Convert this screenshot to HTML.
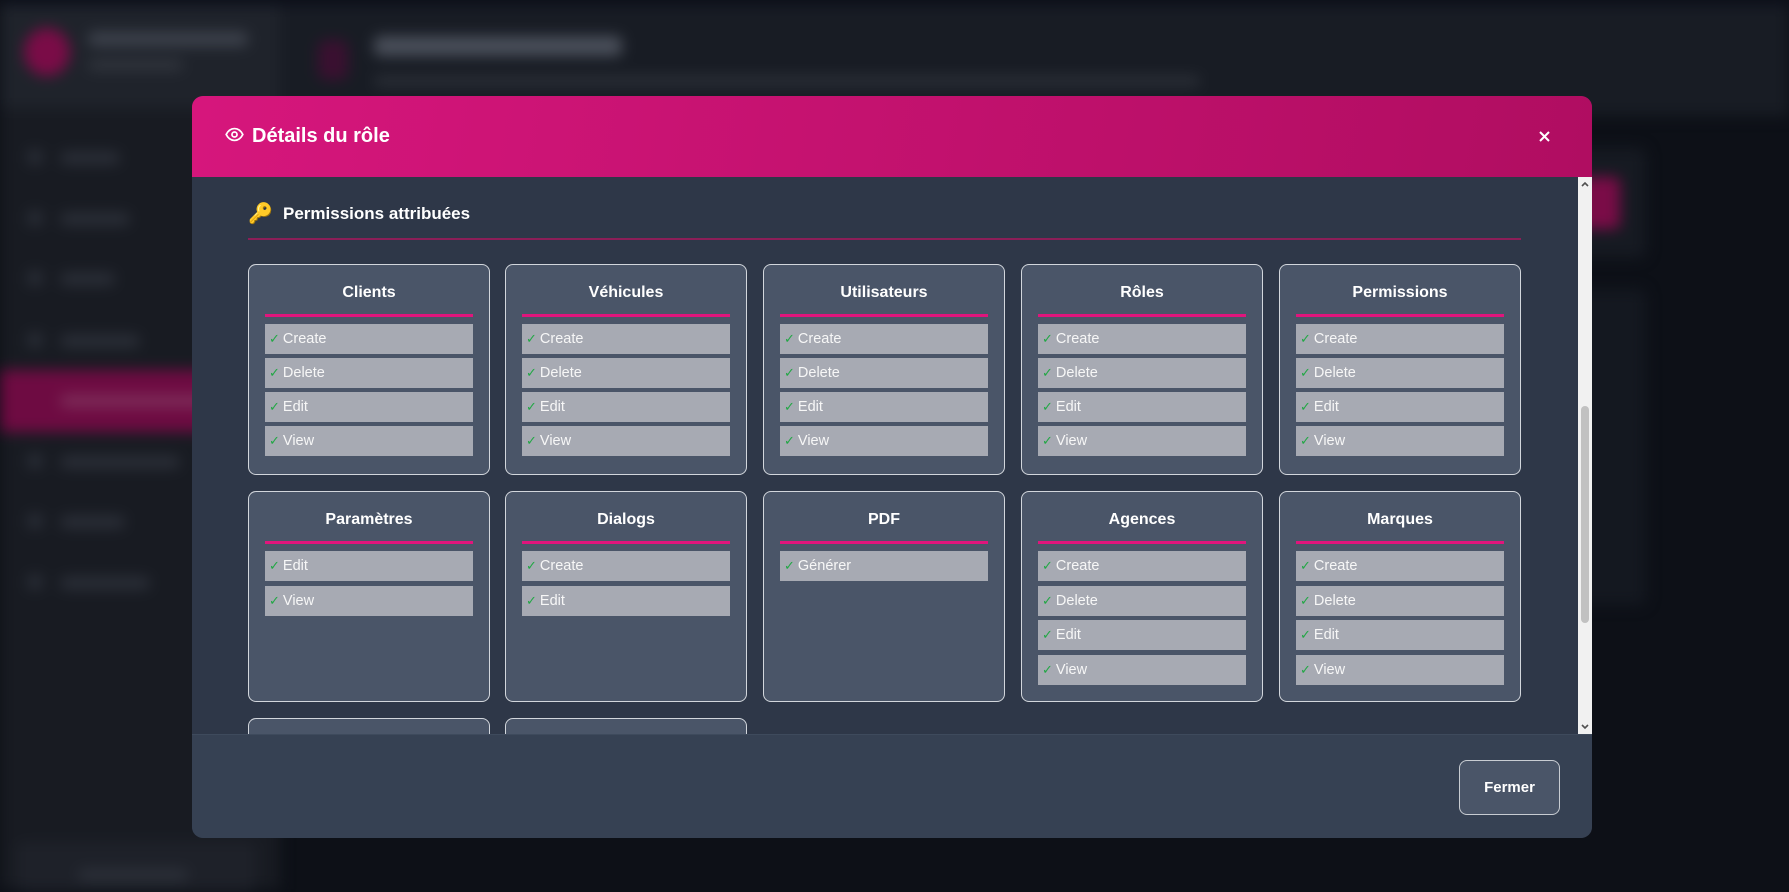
<!DOCTYPE html>
<html><head><meta charset="utf-8">
<style>
*{box-sizing:border-box;margin:0;padding:0}
body{width:1789px;height:889px;overflow:hidden;background:#0d1017;font-family:"Liberation Sans",sans-serif;position:relative}
.bg{position:absolute;inset:0;filter:blur(7px)}
.abs{position:absolute}
.nav{position:absolute;left:60px;height:12px;background:#2c3039;border-radius:6px}
.navi{position:absolute;left:28px;width:14px;height:14px;background:#2c3039;border-radius:3px}
.modal{position:absolute;left:192px;top:96px;width:1400px;height:742px;border-radius:11px;overflow:hidden;background:#2e3748}
.hdr{position:absolute;left:0;top:0;width:1400px;height:81px;background:linear-gradient(100deg,#d6167c,#b00d61)}
.hdr h2{position:absolute;left:60px;top:29px;color:#fff;font-size:20px;font-weight:bold}
.body{position:absolute;left:0;top:81px;width:1386px;height:557px;overflow:hidden}
.sb{position:absolute;right:0;top:81px;width:14px;height:557px;background:#f1f1f1}
.sect{position:absolute;left:56px;top:27px;color:#fff;font-size:17px;font-weight:bold}
.line{position:absolute;left:56px;top:61px;width:1273px;height:2px;background:#8c1e58}
.card{position:absolute;width:242px;height:211px;background:#4a5568;border:1px solid #d2d6dc;border-radius:8px}
.card h3{position:absolute;left:0;right:0;top:19px;text-align:center;color:#fff;font-size:16px;font-weight:bold}
.card .pl{position:absolute;left:16px;right:16px;top:49px;height:3px;background:#e0157c}
.it{position:absolute;left:16px;right:16px;height:30px;background:#a7aab3;color:#f7f7f7;font-size:14.5px;line-height:30px;padding-left:4px}
.it b{color:#22a745;font-weight:normal;margin-right:3px;font-size:13px}
.ftr{position:absolute;left:0;top:638px;width:1400px;height:104px;background:#364153;border-top:1px solid #3e4a5c}
.btn{position:absolute;left:1267px;top:25px;width:101px;height:55px;border:1px solid #c8ccd2;border-radius:8px;background:#4a5568;color:#fff;font-size:15px;font-weight:bold;text-align:center;line-height:53px}
</style></head><body>
<div class="bg">
 <div class="abs" style="left:0;top:0;width:1789px;height:4px;background:#070a1a"></div>
 <div class="abs" style="left:0;top:4px;width:280px;height:885px;background:#181b22"></div>
 <div class="abs" style="left:0;top:4px;width:280px;height:104px;background:#1f232b"></div>
 <div class="abs" style="left:24px;top:28px;width:46px;height:48px;border-radius:50%;background:#7a0c47"></div>
 <div class="abs" style="left:88px;top:32px;width:160px;height:14px;background:#3e434d;border-radius:6px"></div>
 <div class="abs" style="left:88px;top:60px;width:95px;height:10px;background:#33373f;border-radius:5px"></div>
 <div class="abs" style="left:280px;top:4px;width:1509px;height:112px;background:#181c24"></div>
 <div class="abs" style="left:318px;top:40px;width:30px;height:40px;border-radius:8px;background:#3a1030"></div>
 <div class="abs" style="left:374px;top:36px;width:248px;height:20px;background:#4a4f5a;border-radius:6px"></div>
 <div class="abs" style="left:374px;top:76px;width:826px;height:10px;background:#2c3038;border-radius:5px"></div>
 <div class="navi" style="top:150px"></div><div class="nav" style="top:152px;width:60px"></div>
 <div class="navi" style="top:211px"></div><div class="nav" style="top:213px;width:70px"></div>
 <div class="navi" style="top:271px"></div><div class="nav" style="top:273px;width:55px"></div>
 <div class="navi" style="top:333px"></div><div class="nav" style="top:335px;width:80px"></div>
 <div class="abs" style="left:0;top:370px;width:280px;height:62px;background:#6e0b42"></div>
 <div class="nav" style="top:395px;width:170px;background:#7e2e5a"></div>
 <div class="navi" style="top:454px"></div><div class="nav" style="top:456px;width:120px"></div>
 <div class="navi" style="top:514px"></div><div class="nav" style="top:516px;width:65px"></div>
 <div class="navi" style="top:575px"></div><div class="nav" style="top:577px;width:90px"></div>
 <div class="abs" style="left:16px;top:842px;width:240px;height:50px;background:#1e2129;border-radius:8px"></div>
 <div class="nav" style="top:869px;left:78px;width:110px"></div>
 <div class="abs" style="left:1563px;top:148px;width:83px;height:110px;background:#161a22;border-radius:8px"></div>
 <div class="abs" style="left:1572px;top:177px;width:48px;height:52px;background:#7a0c47;border-radius:6px"></div>
 <div class="abs" style="left:1563px;top:289px;width:83px;height:316px;background:#141820;border-radius:8px"></div>
</div>

<div class="modal">
 <div class="hdr">
  <svg class="abs" style="left:33px;top:31px" width="19" height="15" viewBox="0 0 24 18" fill="none" stroke="#fff" stroke-width="2.2"><path d="M1.5 9C4 4 8 1.5 12 1.5S20 4 22.5 9C20 14 16 16.5 12 16.5S4 14 1.5 9Z"/><circle cx="12" cy="9" r="3.2"/></svg>
  <h2>Détails du rôle</h2>
  <svg class="abs" style="left:1347px;top:35px" width="11" height="11" viewBox="0 0 11 11" stroke="#fff" stroke-width="2"><path d="M1 1L10 10M10 1L1 10"/></svg>
 </div>
 <div class="body">
  <div class="abs" style="left:56px;top:24px;font-size:20px;font-family:'Noto Color Emoji','DejaVu Sans',sans-serif;color:#f2b632">🔑</div>
  <div class="sect" style="left:91px">Permissions attribuées</div>
  <div class="line"></div>

  <div class="card" style="left:56px;top:87px"><h3>Clients</h3><div class="pl"></div>
   <div class="it" style="top:59px"><b>✓</b>Create</div><div class="it" style="top:93px"><b>✓</b>Delete</div><div class="it" style="top:127px"><b>✓</b>Edit</div><div class="it" style="top:161px"><b>✓</b>View</div></div>
  <div class="card" style="left:313px;top:87px"><h3>Véhicules</h3><div class="pl"></div>
   <div class="it" style="top:59px"><b>✓</b>Create</div><div class="it" style="top:93px"><b>✓</b>Delete</div><div class="it" style="top:127px"><b>✓</b>Edit</div><div class="it" style="top:161px"><b>✓</b>View</div></div>
  <div class="card" style="left:571px;top:87px"><h3>Utilisateurs</h3><div class="pl"></div>
   <div class="it" style="top:59px"><b>✓</b>Create</div><div class="it" style="top:93px"><b>✓</b>Delete</div><div class="it" style="top:127px"><b>✓</b>Edit</div><div class="it" style="top:161px"><b>✓</b>View</div></div>
  <div class="card" style="left:829px;top:87px"><h3>Rôles</h3><div class="pl"></div>
   <div class="it" style="top:59px"><b>✓</b>Create</div><div class="it" style="top:93px"><b>✓</b>Delete</div><div class="it" style="top:127px"><b>✓</b>Edit</div><div class="it" style="top:161px"><b>✓</b>View</div></div>
  <div class="card" style="left:1087px;top:87px"><h3>Permissions</h3><div class="pl"></div>
   <div class="it" style="top:59px"><b>✓</b>Create</div><div class="it" style="top:93px"><b>✓</b>Delete</div><div class="it" style="top:127px"><b>✓</b>Edit</div><div class="it" style="top:161px"><b>✓</b>View</div></div>

  <div class="card" style="left:56px;top:314px"><h3>Paramètres</h3><div class="pl"></div>
   <div class="it" style="top:59px"><b>✓</b>Edit</div><div class="it" style="top:94px"><b>✓</b>View</div></div>
  <div class="card" style="left:313px;top:314px"><h3>Dialogs</h3><div class="pl"></div>
   <div class="it" style="top:59px"><b>✓</b>Create</div><div class="it" style="top:94px"><b>✓</b>Edit</div></div>
  <div class="card" style="left:571px;top:314px"><h3>PDF</h3><div class="pl"></div>
   <div class="it" style="top:59px"><b>✓</b>Générer</div></div>
  <div class="card" style="left:829px;top:314px"><h3>Agences</h3><div class="pl"></div>
   <div class="it" style="top:59px"><b>✓</b>Create</div><div class="it" style="top:94px"><b>✓</b>Delete</div><div class="it" style="top:128px"><b>✓</b>Edit</div><div class="it" style="top:163px"><b>✓</b>View</div></div>
  <div class="card" style="left:1087px;top:314px"><h3>Marques</h3><div class="pl"></div>
   <div class="it" style="top:59px"><b>✓</b>Create</div><div class="it" style="top:94px"><b>✓</b>Delete</div><div class="it" style="top:128px"><b>✓</b>Edit</div><div class="it" style="top:163px"><b>✓</b>View</div></div>

  <div class="card" style="left:56px;top:541px"></div>
  <div class="card" style="left:313px;top:541px"></div>
 </div>
 <div class="sb">
  <svg class="abs" style="left:3px;top:4px" width="8" height="6" viewBox="0 0 8 6"><path d="M1 5L4 2L7 5" stroke="#505050" stroke-width="1.6" fill="none"/></svg>
  <div class="abs" style="left:3px;top:229px;width:8px;height:217px;background:#c1c1c1;border-radius:4px"></div>
  <svg class="abs" style="left:3px;top:547px" width="8" height="6" viewBox="0 0 8 6"><path d="M1 1L4 4L7 1" stroke="#505050" stroke-width="1.6" fill="none"/></svg>
 </div>
 <div class="ftr"><div class="btn">Fermer</div></div>
</div>
</body></html>
